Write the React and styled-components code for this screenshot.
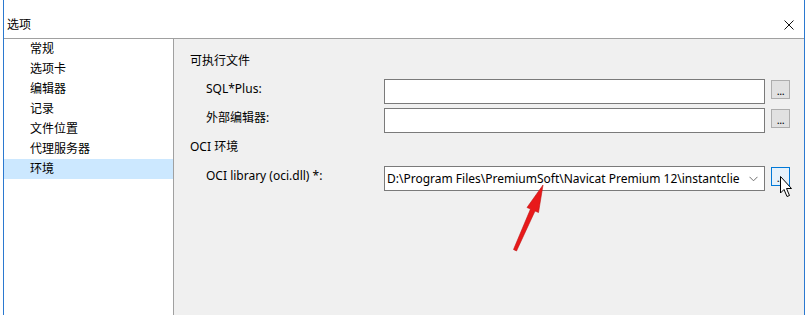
import React from "react";
import styled, { createGlobalStyle } from "styled-components";

const Global = createGlobalStyle`
  html, body { margin: 0; padding: 0; background: #ffffff; }
  body { font-family: "Noto Sans", "Noto Sans CJK SC", sans-serif; font-size: 12px; color: #000; }
  * { box-sizing: border-box; }
`;

const Page = styled.div`
  width: 806px;
  height: 315px;
  overflow: hidden;
  padding: 0 1px 0 3px;
  background: #fff;
  position: relative;
`;

const Window = styled.div`
  height: 100%;
  border-left: 1px solid #2b79d0;
  border-right: 1px solid #2b79d0;
  display: flex;
  flex-direction: column;
  background: #fff;
`;

const TitleBar = styled.div`
  height: 39px;
  flex: none;
  display: flex;
  align-items: flex-start;
  justify-content: space-between;
  padding: 15px 10px 0 3px;
  border-bottom: 1px solid #a0a0a0;
  line-height: 20px;
`;

const CloseIcon = styled.svg`
  width: 10px;
  height: 10px;
  margin-top: 5px;
`;

const Body = styled.div`
  flex: 1;
  display: flex;
  min-height: 0;
`;

const Sidebar = styled.ul`
  list-style: none;
  margin: 0;
  padding: 0;
  width: 170px;
  flex: none;
  border-right: 1px solid #a0a0a0;
  background: #fff;
`;

const NavItem = styled.li`
  height: 20px;
  line-height: 20px;
  padding-left: 26px;
  background: ${(p) => (p.$active ? "#cce8ff" : "transparent")};
`;

const Panel = styled.div`
  flex: 1;
  background: #f0f0f0;
  padding: 12px 14px 0 16px;
  display: flex;
  flex-direction: column;
`;

const SectionTitle = styled.div`
  height: 20px;
  line-height: 20px;
  margin-top: ${(p) => p.$mt || 0}px;
`;

const Row = styled.div`
  display: flex;
  align-items: flex-start;
  margin-top: ${(p) => p.$mt || 0}px;
  padding-left: 16px;
`;

const Label = styled.div`
  width: 178px;
  flex: none;
  line-height: 20px;
`;

const Input = styled.div`
  width: 381px;
  height: 25px;
  flex: none;
  background: #fff;
  border: 1px solid #7a7a7a;
`;

const Combo = styled.div`
  width: 381px;
  height: 25px;
  flex: none;
  background: #fff;
  border: 1px solid #7a7a7a;
  display: flex;
  align-items: center;
  padding: 0 6px 0 2px;
  gap: 6px;
`;

const ComboText = styled.div`
  flex: 1;
  overflow: hidden;
  white-space: nowrap;
  line-height: 20px;
`;

const Chevron = styled.svg`
  width: 9px;
  height: 6px;
  flex: none;
`;

const Browse = styled.div`
  width: 19px;
  height: 19px;
  margin: 1px 0 0 6px;
  flex: none;
  background: ${(p) => (p.$focus ? "#e5f1fb" : "#e1e1e1")};
  border: 1px solid ${(p) => (p.$focus ? "#0078d7" : "#adadad")};
  display: flex;
  align-items: center;
  justify-content: center;
  font-size: 11px;
  line-height: 1;
  padding-top: 2px;
  letter-spacing: -0.5px;
`;

const Overlay = styled.svg`
  position: absolute;
  left: 0;
  top: 0;
  width: 806px;
  height: 315px;
  pointer-events: none;
`;

const navItems = ["常规", "选项卡", "编辑器", "记录", "文件位置", "代理服务器", "环境"];

export default function App() {
  return (
    <>
      <Global />
      <Page>
        <Window>
          <TitleBar>
            <span>选项</span>
            <CloseIcon viewBox="0 0 10 10">
              <path d="M0.5 0.5 L9.5 9.5 M9.5 0.5 L0.5 9.5" stroke="#111" strokeWidth="1" />
            </CloseIcon>
          </TitleBar>
          <Body>
            <Sidebar>
              {navItems.map((n) => (
                <NavItem key={n} $active={n === "环境"}>
                  {n}
                </NavItem>
              ))}
            </Sidebar>
            <Panel>
              <SectionTitle>可执行文件</SectionTitle>
              <Row $mt={8}>
                <Label>SQL*Plus:</Label>
                <Input />
                <Browse>...</Browse>
              </Row>
              <Row $mt={4}>
                <Label>外部编辑器:</Label>
                <Input />
                <Browse>...</Browse>
              </Row>
              <SectionTitle $mt={4}>OCI 环境</SectionTitle>
              <Row $mt={9}>
                <Label>OCI library (oci.dll) *:</Label>
                <Combo>
                  <ComboText>D:\Program Files\PremiumSoft\Navicat Premium 12\instantclie</ComboText>
                  <Chevron viewBox="0 0 9 6">
                    <path d="M0.5 0.8 L4.5 4.8 L8.5 0.8" fill="none" stroke="#707070" strokeWidth="1" />
                  </Chevron>
                </Combo>
                <Browse $focus>...</Browse>
              </Row>
            </Panel>
          </Body>
        </Window>
        <Overlay viewBox="0 0 806 315">
          <polygon
            points="543,185 538.5,212.5 535,211 516.5,251 513.5,249.5 530.5,209 527,207.5"
            fill="#e8191a"
            stroke="#c01010"
            strokeWidth="0.6"
            strokeLinejoin="round"
          />
          <path
            d="M780.5 176.5 L780.5 193 L784 189.5 L787 196.5 L789.5 195.5 L786.5 188.5 L791.5 188.5 Z"
            fill="#fff"
            stroke="#000"
            strokeWidth="1"
            strokeLinejoin="miter"
          />
        </Overlay>
      </Page>
    </>
  );
}
